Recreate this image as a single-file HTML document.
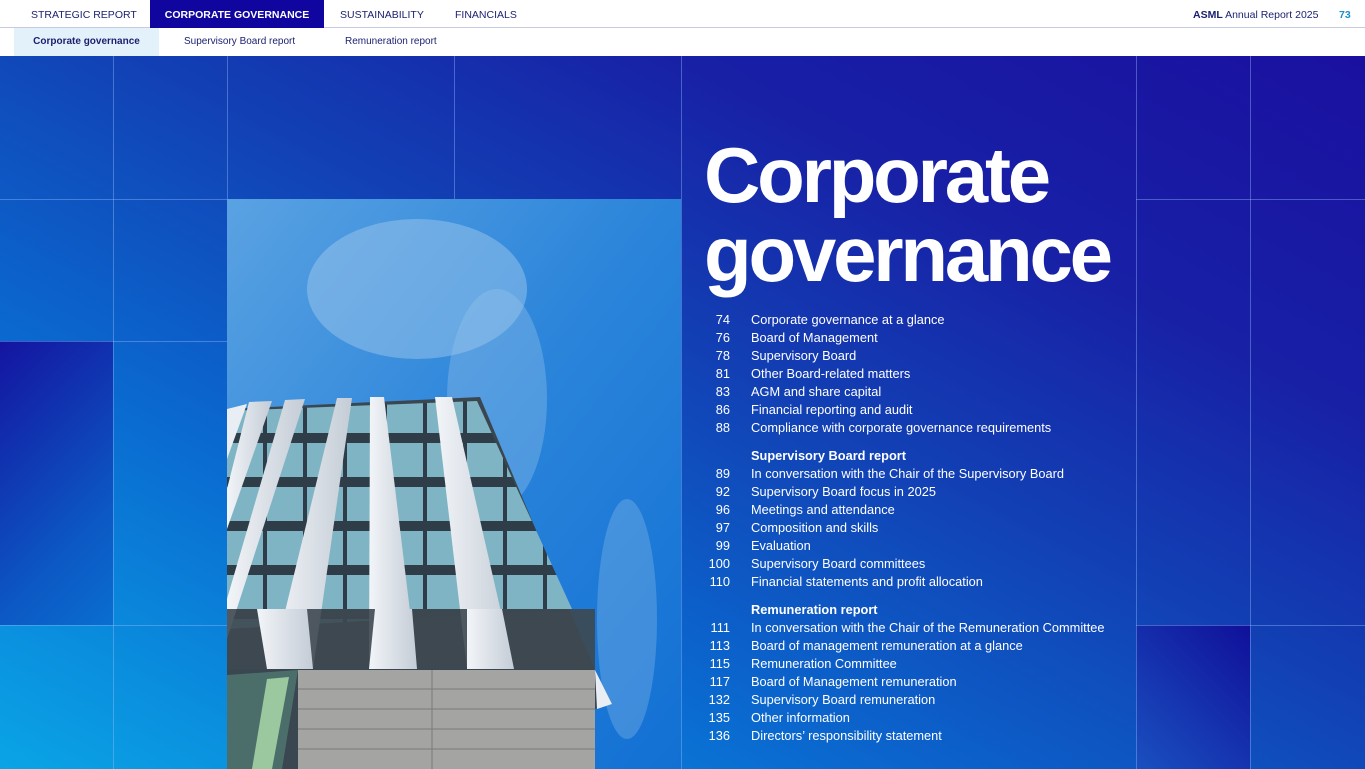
<!DOCTYPE html>
<html><head><meta charset="utf-8"><style>
*{margin:0;padding:0;box-sizing:border-box}
body{width:1365px;height:769px;overflow:hidden;font-family:"Liberation Sans",Arial,sans-serif;position:relative;background:#fff}
.top{position:absolute;left:0;top:0;width:1365px;height:28px;background:#fff;border-bottom:1px solid #c9cbe0}
.top span{position:absolute;top:0;height:28px;line-height:30px;font-size:10.5px;color:#1a1f6e}
.sub{position:absolute;left:0;top:28px;width:1365px;height:28px;background:#fff}
.sub span{position:absolute;top:0;height:28px;line-height:28px;font-size:10px;color:#1a1f6e}
.bg{position:absolute;left:0;top:56px;width:1365px;height:713px;background:linear-gradient(to top right,#0aa4e6 0%,#0a6ad0 30%,#1240b4 55%,#1820a6 75%,#1a10a0 100%)}
.t{position:absolute}
.vl{position:absolute;top:56px;width:1px;background:rgba(150,190,255,.4)}
.hl{position:absolute;height:1px;background:rgba(150,190,255,.4)}
h1{position:absolute;left:704px;top:136px;font-size:78px;line-height:79px;font-weight:bold;color:#fff;letter-spacing:-3.2px}
.toc{position:absolute;left:700px;top:311px;color:#fff;font-size:12.8px}
.toc div{height:18px;line-height:18px;position:relative;white-space:nowrap}
.toc b{position:absolute;left:0;width:30px;text-align:right;font-weight:normal}
.toc i{position:absolute;left:51px;font-style:normal}
.toc .h i{font-weight:bold}
</style></head><body>
<div class="top">
<span style="left:31px">STRATEGIC REPORT</span>
<span style="left:150px;width:174px;background:#10069f;color:#fff;font-weight:bold;text-align:center">CORPORATE GOVERNANCE</span>
<span style="left:340px">SUSTAINABILITY</span>
<span style="left:455px">FINANCIALS</span>
<span style="left:1193px"><b>ASML</b> Annual Report 2025</span>
<span style="left:1339px;color:#1a8fcf;font-weight:bold">73</span>
</div>
<div class="sub">
<span style="left:14px;width:145px;background:#e3f1fb;font-weight:bold;text-align:center">Corporate governance</span>
<span style="left:184px">Supervisory Board report</span>
<span style="left:345px">Remuneration report</span>
</div>
<div class="bg"></div>
<div class="t" style="left:0;top:341px;width:113px;height:284px;background:linear-gradient(135deg,#1414a0,#0c58c4 70%,#0a6ed0)"></div>
<div class="t" style="left:1136px;top:625px;width:114px;height:144px;background:linear-gradient(225deg,#10109a,#1a50c0)"></div>
<div class="vl" style="left:113px;height:713px"></div>
<div class="vl" style="left:227px;height:143px"></div>
<div class="vl" style="left:454px;height:143px"></div>
<div class="vl" style="left:681px;height:713px"></div>
<div class="vl" style="left:1136px;height:713px"></div>
<div class="vl" style="left:1250px;height:713px"></div>
<div class="hl" style="left:0;top:199px;width:681px"></div>
<div class="hl" style="left:0;top:341px;width:227px"></div>
<div class="hl" style="left:0;top:625px;width:227px"></div>
<div class="hl" style="left:1136px;top:199px;width:229px"></div>
<div class="hl" style="left:1136px;top:625px;width:229px"></div>
<svg style="position:absolute;left:227px;top:199px" width="454" height="570" viewBox="0 0 454 570">
<defs>
<linearGradient id="sky" x1="0" y1="0" x2="1" y2="1"><stop offset="0" stop-color="#5aa2e2"/><stop offset=".5" stop-color="#2a84da"/><stop offset="1" stop-color="#1270d4"/></linearGradient>
<linearGradient id="fin" x1="0" y1="0" x2="1" y2="0"><stop offset="0" stop-color="#f2f5f8"/><stop offset="1" stop-color="#c4ccd6"/></linearGradient>
<pattern id="win" width="40" height="44" patternUnits="userSpaceOnUse" y="200"><rect width="40" height="44" fill="#7fb4c4"/><rect y="34" width="40" height="10" fill="#2e3d48"/><rect x="36" width="4" height="44" fill="#2e3d48"/></pattern>
</defs>
<rect width="454" height="570" fill="url(#sky)"/>
<ellipse cx="190" cy="90" rx="110" ry="70" fill="#a6ccee" opacity=".45"/>
<ellipse cx="270" cy="200" rx="50" ry="110" fill="#9cc6ec" opacity=".35"/>
<ellipse cx="400" cy="420" rx="30" ry="120" fill="#9cc6ec" opacity=".3"/>
<polygon points="0,210 253,198 368,471 385,505 368,510 368,570 0,570" fill="#3a4650"/>
<polygon points="0,212 250,202 345,410 0,430" fill="url(#win)"/>
<polygon points="0,210 20,205 0,260" fill="#e8eef4"/>
<polygon points="22,203 45,202 0,330 0,290" fill="url(#fin)"/>
<polygon points="58,201 78,200 0,440 0,400" fill="url(#fin)"/>
<polygon points="110,199 125,199 86,470 44,470" fill="url(#fin)"/>
<polygon points="143,198 157,198 190,470 142,470" fill="url(#fin)"/>
<polygon points="208,198 225,198 287,470 240,470" fill="url(#fin)"/>
<rect x="0" y="410" width="368" height="60" fill="#3e4850" opacity=".9"/>
<polygon points="44,470 86,470 110,199 125,199" fill="url(#fin)" opacity="0"/>
<polygon points="30,410 80,410 86,470 40,470" fill="url(#fin)"/>
<polygon points="148,410 185,410 190,470 142,470" fill="url(#fin)"/>
<polygon points="240,410 275,410 287,470 240,470" fill="url(#fin)"/>
<polygon points="71,471 368,471 368,570 71,570" fill="#a4a5a2"/>
<polygon points="0,476 71,471 55,570 0,570" fill="#4c6e6a"/>
<polygon points="40,480 62,478 45,570 25,570" fill="#9cc8a0"/>
<g stroke="#7a7b79" stroke-width="1"><line x1="71" y1="490" x2="368" y2="490"/><line x1="71" y1="510" x2="368" y2="510"/><line x1="71" y1="530" x2="368" y2="530"/><line x1="71" y1="550" x2="368" y2="550"/><line x1="205" y1="471" x2="205" y2="570"/></g>
<polygon points="368,471 385,505 370,510" fill="#e8eef4"/>
</svg>
<h1>Corporate<br>governance</h1>
<div class="toc">
<div><b>74</b><i>Corporate governance at a glance</i></div>
<div><b>76</b><i>Board of Management</i></div>
<div><b>78</b><i>Supervisory Board</i></div>
<div><b>81</b><i>Other Board-related matters</i></div>
<div><b>83</b><i>AGM and share capital</i></div>
<div><b>86</b><i>Financial reporting and audit</i></div>
<div><b>88</b><i>Compliance with corporate governance requirements</i></div>
<div style="height:10px"></div>
<div class="h"><i>Supervisory Board report</i></div>
<div><b>89</b><i>In conversation with the Chair of the Supervisory Board</i></div>
<div><b>92</b><i>Supervisory Board focus in 2025</i></div>
<div><b>96</b><i>Meetings and attendance</i></div>
<div><b>97</b><i>Composition and skills</i></div>
<div><b>99</b><i>Evaluation</i></div>
<div><b>100</b><i>Supervisory Board committees</i></div>
<div><b>110</b><i>Financial statements and profit allocation</i></div>
<div style="height:10px"></div>
<div class="h"><i>Remuneration report</i></div>
<div><b>111</b><i>In conversation with the Chair of the Remuneration Committee</i></div>
<div><b>113</b><i>Board of management remuneration at a glance</i></div>
<div><b>115</b><i>Remuneration Committee</i></div>
<div><b>117</b><i>Board of Management remuneration</i></div>
<div><b>132</b><i>Supervisory Board remuneration</i></div>
<div><b>135</b><i>Other information</i></div>
<div><b>136</b><i>Directors’ responsibility statement</i></div>
</div>
</body></html>
